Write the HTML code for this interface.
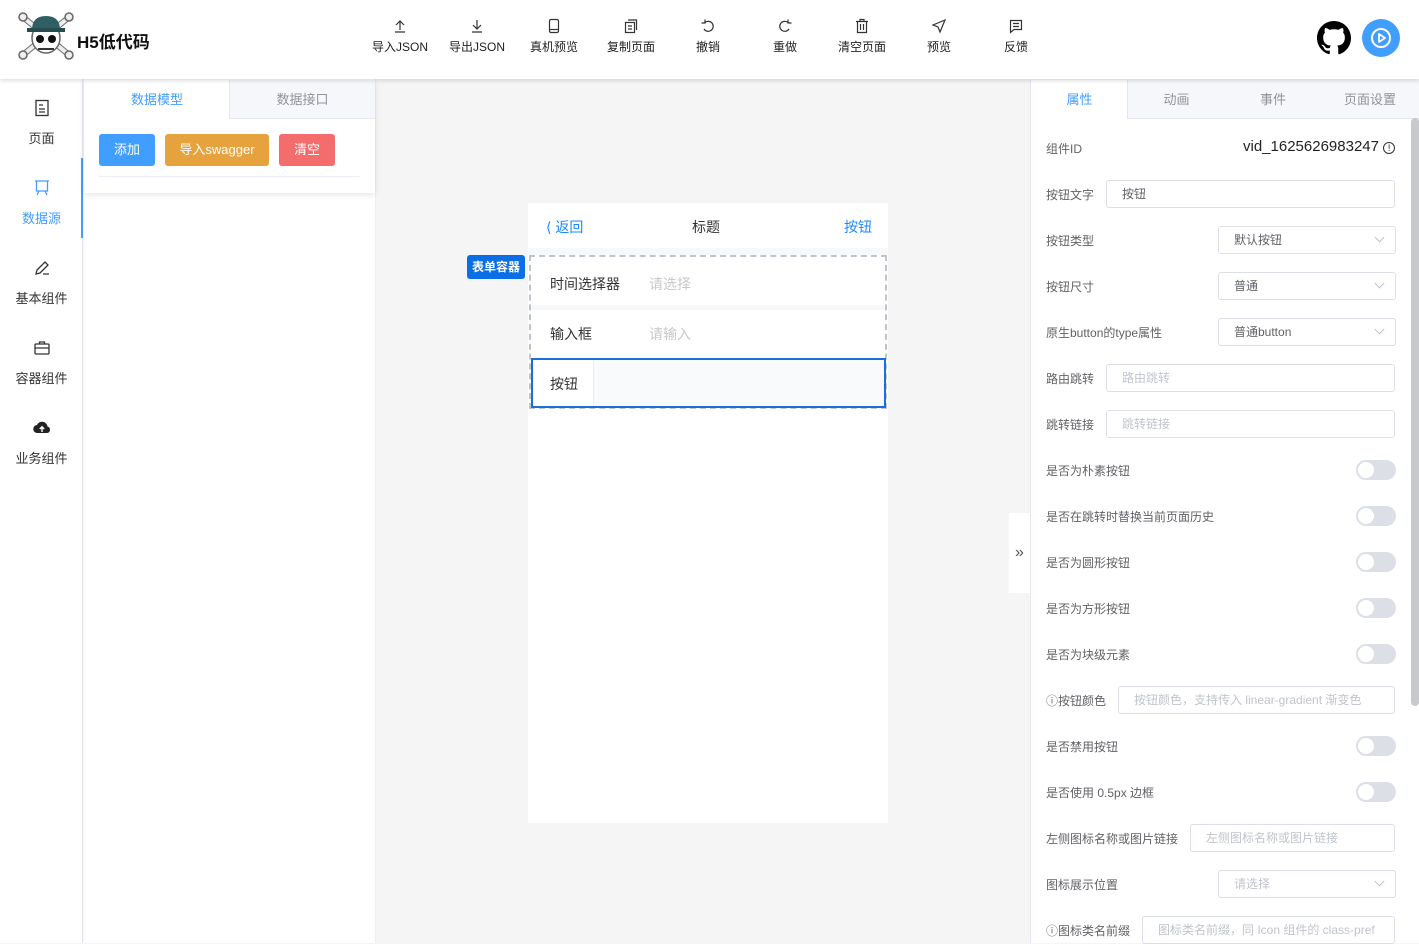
<!DOCTYPE html>
<html><head><meta charset="utf-8"><style>
*{box-sizing:border-box;margin:0;padding:0}
body{width:1419px;height:943px;overflow:hidden;background:#f5f5f5;font-family:"Liberation Sans","Noto Sans CJK SC",sans-serif;color:#303133;position:relative}
.abs{position:absolute}
header{position:absolute;left:0;top:0;width:1419px;height:79px;background:#fff;box-shadow:0 2px 4px rgba(0,0,0,.12);z-index:5}
.tb{position:absolute;top:18px;width:70px;margin-left:-35px;text-align:center;font-size:12px;color:#222}
.tb svg{display:block;margin:0 auto 4px;width:16px;height:16px}
.side{left:0;top:79px;width:83px;height:864px;background:#fff;border-right:1px solid #e4e7ed}
.si{position:absolute;left:0;width:83px;text-align:center;font-size:13px;color:#333}
.si svg{display:block;margin:0 auto 10px;width:20px;height:20px}
.btn{position:absolute;top:134px;height:32px;border-radius:3px;color:#fff;font-size:13px;text-align:center;line-height:32px}
.tab{position:absolute;top:80px;height:39px;line-height:39px;text-align:center;font-size:13px;color:#909399;background:#f5f7fa;border-bottom:1px solid #e4e7ed;border-left:1px solid #e4e7ed}
.lbl{position:absolute;left:1046px;font-size:12px;color:#606266}
.inp{position:absolute;right:24px;height:28px;border:1px solid #dcdfe6;border-radius:3px;font-size:12px;color:#c0c4cc;padding-left:15px;line-height:26px;background:#fff}
.inp.v{color:#606266}
.sel::after{content:"";position:absolute;right:12px;top:7px;width:6px;height:6px;border-right:1px solid #c0c4cc;border-bottom:1px solid #c0c4cc;transform:rotate(45deg)}
.sw{position:absolute;left:1356px;width:40px;height:20px;border-radius:10px;background:#dcdfe6}
.sw::after{content:"";position:absolute;left:2px;top:2px;width:16px;height:16px;border-radius:50%;background:#fff}
</style></head><body>
<header>
<svg class="abs" style="left:18px;top:10px" width="56" height="52" viewBox="0 0 56 52">
<g stroke="#666" stroke-width="1.5" fill="#eee"><path d="M6 8l44 36M50 8L6 44" stroke-width="6" stroke="#777"/><path d="M6 8l44 36M50 8L6 44" stroke-width="4" stroke="#eee"/><circle cx="5" cy="7" r="4"/><circle cx="51" cy="7" r="4"/><circle cx="5" cy="45" r="4"/><circle cx="51" cy="45" r="4"/>
<ellipse cx="28" cy="28" rx="14" ry="15" fill="#fff"/></g>
<path d="M14 20Q14 6 28 6Q42 6 42 20Z" fill="#2f5f63"/><rect x="9" y="18" width="38" height="4" fill="#254d50"/>
<circle cx="22" cy="29" r="4" fill="#111"/><circle cx="34" cy="29" r="4" fill="#111"/><path d="M20 39h16" stroke="#333" stroke-width="2"/></svg>
<div class="abs" style="left:77px;top:28px;font-size:17px;font-weight:bold;color:#111">H5低代码</div>
<div class="tb" style="left:400px"><svg viewBox="0 0 16 16" fill="none" stroke="#333" stroke-width="1.2"><path d="M8 12V3M4 7l4-4 4 4M3 14h10"/></svg>导入JSON</div>
<div class="tb" style="left:477px"><svg viewBox="0 0 16 16" fill="none" stroke="#333" stroke-width="1.2"><path d="M8 2v9M4 7l4 4 4-4M3 14h10"/></svg>导出JSON</div>
<div class="tb" style="left:554px"><svg viewBox="0 0 16 16" fill="none" stroke="#333" stroke-width="1.2"><rect x="3.5" y="1.5" width="9" height="13" rx="1.5"/><path d="M3.5 11.5h9"/></svg>真机预览</div>
<div class="tb" style="left:631px"><svg viewBox="0 0 16 16" fill="none" stroke="#333" stroke-width="1.2"><rect x="2.5" y="4.5" width="9" height="10"/><path d="M5 2h8.5v10M5 8h4M5 11h4"/></svg>复制页面</div>
<div class="tb" style="left:708px"><svg viewBox="0 0 16 16" fill="none" stroke="#333" stroke-width="1.2"><path d="M5 4.5A5 5 0 1 1 4 11M5 1.5v3.5H1.5"/></svg>撤销</div>
<div class="tb" style="left:785px"><svg viewBox="0 0 16 16" fill="none" stroke="#333" stroke-width="1.2"><path d="M11 4.5A5 5 0 1 0 12 11M11 1.5v3.5h3.5"/></svg>重做</div>
<div class="tb" style="left:862px"><svg viewBox="0 0 16 16" fill="none" stroke="#333" stroke-width="1.2"><path d="M2 3.5h12M6 3.5V1.5h4v2M3.5 3.5v11h9v-11M6.5 6v6M9.5 6v6"/></svg>清空页面</div>
<div class="tb" style="left:939px"><svg viewBox="0 0 16 16" fill="none" stroke="#333" stroke-width="1.2"><path d="M14 2L2 7l5 2 2 5z"/></svg>预览</div>
<div class="tb" style="left:1016px"><svg viewBox="0 0 16 16" fill="none" stroke="#333" stroke-width="1.2"><path d="M2.5 2.5h11v9H6l-3.5 3z"/><path d="M5 5.5h6M5 8.5h6"/></svg>反馈</div>
<svg class="abs" style="left:1317px;top:21px" width="34" height="34" viewBox="0 0 16 16"><path fill="#000" d="M8 0C3.580 0 0 3.58 0 8c0 3.54 2.29 6.53 5.47 7.59.4.07.55-.17.55-.38v-1.33c-2.23.48-2.7-1.070-2.7-1.07-.36-.92-.89-1.17-.89-1.17-.73-.5.06-.49.06-.49.8.06 1.23.83 1.23.83.71 1.22 1.87.87 2.33.66.07-.52.28-.87.5-1.07-1.78-.2-3.64-.89-3.64-3.95 0-.87.31-1.59.82-2.15-.08-.2-.36-1.02.08-2.12 0 0 .67-.21 2.2.82a7.6 7.6 0 0 1 4 0c1.53-1.04 2.2-.82 2.2-.82.44 1.1.16 1.92.08 2.12.51.56.82 1.27.82 2.15 0 3.07-1.87 3.75-3.65 3.95.29.25.54.73.54 1.48v2.2c0 .21.15.46.55.38A8.01 8.01 0 0 0 16 8c0-4.42-3.58-8-8-8z"/></svg>
<svg class="abs" style="left:1362px;top:19px" width="38" height="38" viewBox="0 0 38 38"><circle cx="19" cy="19" r="19" fill="#409eff"/><circle cx="19" cy="19" r="9" fill="none" stroke="#fff" stroke-width="2"/><path d="M17 15v8l6-4z" fill="none" stroke="#fff" stroke-width="1.8" stroke-linejoin="round"/></svg>
</header>

<div class="abs side"></div>
<div class="abs" style="left:84px;top:79px;width:292px;height:864px;background:#fff;border-right:1px solid #eceef2"></div>
<div class="abs" style="left:81px;top:158px;width:2px;height:80px;background:#409eff"></div>
<div class="si" style="top:98px"><svg viewBox="0 0 20 20" fill="none" stroke="#333" stroke-width="1.3"><rect x="4" y="2.5" width="12" height="15"/><path d="M7 7h4M7 11h6M7 14h6"/></svg>页面</div>
<div class="si" style="top:178px;color:#409eff"><svg viewBox="0 0 20 20" fill="none" stroke="#409eff" stroke-width="1.3"><path d="M3 3h14M4.5 3v10h11V3M7 13l-2 4M13 13l2 4"/></svg>数据源</div>
<div class="si" style="top:258px"><svg viewBox="0 0 20 20" fill="none" stroke="#333" stroke-width="1.3"><path d="M4 16l1-4 8-8 3 3-8 8zM11 16h6"/></svg>基本组件</div>
<div class="si" style="top:338px"><svg viewBox="0 0 20 20" fill="none" stroke="#333" stroke-width="1.3"><rect x="3" y="6" width="14" height="10" rx="1"/><path d="M7.5 6V4h5v2M3 10h14"/></svg>容器组件</div>
<div class="si" style="top:418px"><svg viewBox="0 0 20 20"><path d="M5.5 15a4 4 0 0 1-.5-8 5.5 5.5 0 0 1 10.5 1.5A3.3 3.3 0 0 1 15 15z" fill="#222"/><path d="M10 14V9M7.8 11L10 8.8 12.2 11" stroke="#fff" stroke-width="1.4" fill="none"/></svg>业务组件</div>

<div class="abs" style="left:84px;top:80px;width:291px;height:113px;background:#fff;box-shadow:0 2px 6px rgba(0,0,0,.1)"></div>
<div class="tab" style="left:84px;width:146px;background:#fff;color:#409eff;border-bottom:none;border-left:none">数据模型</div>
<div class="tab" style="left:229px;width:146px">数据接口</div>
<div class="btn" style="left:99px;width:56px;background:#409eff">添加</div>
<div class="btn" style="left:165px;width:104px;background:#e6a23c">导入swagger</div>
<div class="btn" style="left:279px;width:56px;background:#f56c6c">清空</div>
<div class="abs" style="left:99px;top:176px;width:261px;height:1px;background:#ebeef5"></div>

<div class="abs" style="left:528px;top:203px;width:360px;height:620px;background:#fff"></div>
<div class="abs" style="left:546px;top:217px;font-size:14px;color:#1989fa">&#10216; 返回</div>
<div class="abs" style="left:692px;top:217px;font-size:14px;color:#323233">标题</div>
<div class="abs" style="left:844px;top:217px;font-size:14px;color:#1989fa">按钮</div>
<div class="abs" style="left:528px;top:248px;width:360px;height:7px;background:#f7f8fa"></div>
<div class="abs" style="left:467px;top:255px;width:58px;height:24px;background:#0a6fe6;border-radius:3px;color:#fff;font-size:12px;font-weight:bold;text-align:center;line-height:24px">表单容器</div>
<div class="abs" style="left:529px;top:255px;width:358px;height:154px;border:2px dashed #bfc4cc"></div>
<div class="abs" style="left:531px;top:305px;width:354px;height:5px;background:#f7f8fa"></div>
<div class="abs" style="left:550px;top:274px;font-size:14px;color:#323233">时间选择器</div>
<div class="abs" style="left:649px;top:274px;font-size:14px;color:#c8c9cc">请选择</div>
<div class="abs" style="left:550px;top:324px;font-size:14px;color:#323233">输入框</div>
<div class="abs" style="left:649px;top:324px;font-size:14px;color:#c8c9cc">请输入</div>
<div class="abs" style="left:531px;top:358px;width:355px;height:50px;border:2px solid #1a6fd9;background:#f9fafb"></div>
<div class="abs" style="left:533px;top:360px;width:61px;height:46px;background:#fff;border-right:1px solid #eee"></div>
<div class="abs" style="left:550px;top:374px;font-size:14px;color:#323233">按钮</div>

<div class="abs" style="left:1009px;top:513px;width:21px;height:80px;background:#fff;font-size:16px;color:#555;text-align:center;line-height:80px">»</div>
<div class="abs" style="left:1030px;top:80px;width:389px;height:863px;background:#fff;border-left:1px solid #e4e7ed"></div>
<div class="tab" style="left:1031px;width:97px;background:#fff;color:#409eff;border:none">属性</div>
<div class="tab" style="left:1127px;width:98px">动画</div>
<div class="tab" style="left:1224px;width:98px;border-left:none">事件</div>
<div class="tab" style="left:1321px;width:98px;border-left:none">页面设置</div>
<div class="abs" style="left:1411px;top:118px;width:8px;height:588px;background:#c7c9cc;border-radius:4px"></div>

<div class="lbl" style="top:140px">组件ID</div>
<div class="abs" style="left:1243px;top:138px;font-size:15px;color:#222">vid_1625626983247 <span style="display:inline-block;width:12px;height:12px;border:1px solid #333;border-radius:50%;line-height:10px;text-align:center;font-size:9px">!</span></div>
<div class="lbl" style="top:186px">按钮文字</div><div class="inp v" style="left:1106px;top:180px">按钮</div>
<div class="lbl" style="top:232px">按钮类型</div><div class="inp v sel" style="left:1218px;top:226px;width:178px">默认按钮</div>
<div class="lbl" style="top:278px">按钮尺寸</div><div class="inp v sel" style="left:1218px;top:272px;width:178px">普通</div>
<div class="lbl" style="top:324px">原生button的type属性</div><div class="inp v sel" style="left:1218px;top:318px;width:178px">普通button</div>
<div class="lbl" style="top:370px">路由跳转</div><div class="inp" style="left:1106px;top:364px">路由跳转</div>
<div class="lbl" style="top:416px">跳转链接</div><div class="inp" style="left:1106px;top:410px">跳转链接</div>
<div class="lbl" style="top:462px">是否为朴素按钮</div><div class="sw" style="top:460px"></div>
<div class="lbl" style="top:508px">是否在跳转时替换当前页面历史</div><div class="sw" style="top:506px"></div>
<div class="lbl" style="top:554px">是否为圆形按钮</div><div class="sw" style="top:552px"></div>
<div class="lbl" style="top:600px">是否为方形按钮</div><div class="sw" style="top:598px"></div>
<div class="lbl" style="top:646px">是否为块级元素</div><div class="sw" style="top:644px"></div>
<div class="lbl" style="top:692px">ⓘ按钮颜色</div><div class="inp" style="left:1118px;top:686px">按钮颜色，支持传入 linear-gradient 渐变色</div>
<div class="lbl" style="top:738px">是否禁用按钮</div><div class="sw" style="top:736px"></div>
<div class="lbl" style="top:784px">是否使用 0.5px 边框</div><div class="sw" style="top:782px"></div>
<div class="lbl" style="top:830px">左侧图标名称或图片链接</div><div class="inp" style="left:1190px;top:824px">左侧图标名称或图片链接</div>
<div class="lbl" style="top:876px">图标展示位置</div><div class="inp sel" style="left:1218px;top:870px;width:178px">请选择</div>
<div class="lbl" style="top:922px">ⓘ图标类名前缀</div><div class="inp" style="left:1142px;top:916px;overflow:hidden;white-space:nowrap">图标类名前缀，同 Icon 组件的 class-pref</div>
</body></html>
